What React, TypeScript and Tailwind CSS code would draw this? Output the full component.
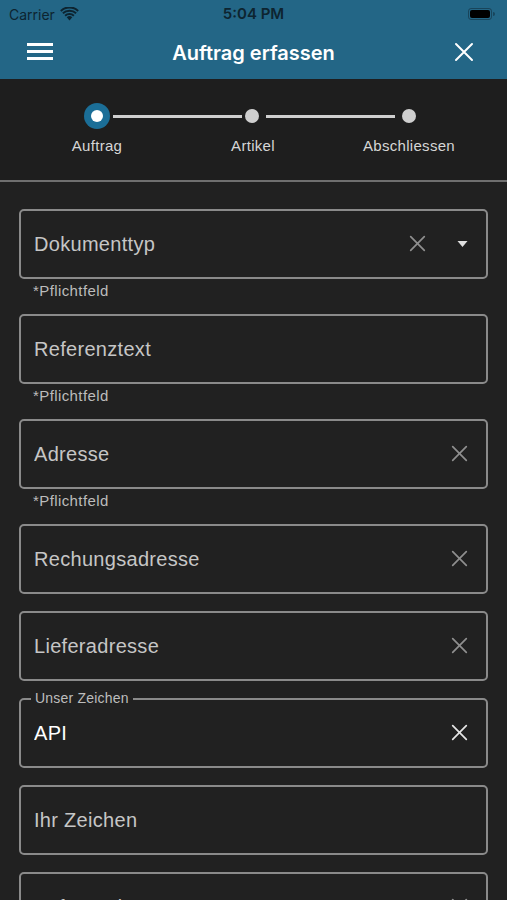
import { useState } from "react";

type Field = {
  label: string;
  value?: string;
  required?: boolean;
  clear?: boolean;
  dropdown?: boolean;
  floating?: string;
};

const FIELDS: Field[] = [
  { label: "Dokumenttyp", required: true, clear: true, dropdown: true },
  { label: "Referenztext", required: true },
  { label: "Adresse", required: true, clear: true },
  { label: "Rechungsadresse", clear: true },
  { label: "Lieferadresse", clear: true },
  { label: "Unser Zeichen", value: "API", clear: true, floating: "Unser Zeichen" },
  { label: "Ihr Zeichen" },
  { label: "Auftragsdatum", clear: true },
];

const STEPS = ["Auftrag", "Artikel", "Abschliessen"];

function XIcon({ className }: { className: string }) {
  return (
    <svg viewBox="0 0 20 20" className={className} fill="none" stroke="currentColor" strokeWidth={2} strokeLinecap="round">
      <path d="M2 2 L18 18 M18 2 L2 18" />
    </svg>
  );
}

function StatusBar() {
  return (
    <div className="relative flex h-[28px] items-center px-[9px] text-[14px] text-[#0d2430] font-['Inter',sans-serif]">
      <div className="flex items-center gap-[5px]">
        <span>Carrier</span>
        <svg viewBox="0 0 20 15" className="h-[14px] w-[19px]" fill="#0d2430">
          <path d="M10 14.5 L7 11 A4.5 4.5 0 0 1 13 11 Z" />
          <path d="M4.6 8.6 A7.8 7.8 0 0 1 15.4 8.6 L14 10.2 A5.8 5.8 0 0 0 6 10.2 Z" />
          <path d="M2.2 6 A11.2 11.2 0 0 1 17.8 6 L16.4 7.6 A9.2 9.2 0 0 0 3.6 7.6 Z" />
          <path d="M0 3.4 A14.4 14.4 0 0 1 20 3.4 L18.6 5 A12.4 12.4 0 0 0 1.4 5 Z" />
        </svg>
      </div>
      <span className="absolute left-1/2 -translate-x-1/2 font-semibold text-[15px]">5:04 PM</span>
      <div className="ml-auto flex items-center gap-[1px] pr-[3px]">
        <div className="h-[12px] w-[24px] rounded-[3px] border border-[#0d2430]/50 p-[1px]">
          <div className="h-full w-full rounded-[2px] bg-black" />
        </div>
        <div className="h-[4px] w-[2px] rounded-r bg-[#0d2430]/50" />
      </div>
    </div>
  );
}

function NavBar() {
  return (
    <div className="relative flex h-[51px] items-center px-[27px] pb-[4px] font-['Inter',sans-serif]">
      <div className="flex w-[26px] flex-col gap-[4px]">
        <div className="h-[3px] bg-white" />
        <div className="h-[3px] bg-white" />
        <div className="h-[3px] bg-white" />
      </div>
      <span className="absolute left-1/2 top-[10px] -translate-x-1/2 text-[20px] font-semibold text-white">Auftrag erfassen</span>
      <XIcon className="ml-auto mr-[6px] h-[20px] w-[20px] text-white" />
    </div>
  );
}

function Stepper() {
  return (
    <div className="border-b-2 border-[#6f6f6f] bg-[#1e1e1e] pt-[24px] pb-[22px] font-['Liberation_Sans',sans-serif]">
      <div className="flex items-center px-[84px]">
        <div className="flex h-[26px] w-[26px] items-center justify-center rounded-full bg-[#1b6e97]">
          <div className="h-[12px] w-[12px] rounded-full bg-white" />
        </div>
        <div className="mx-[3px] h-[3px] flex-1 bg-[#cfcfcf]" />
        <div className="h-[14px] w-[14px] rounded-full bg-[#cfcfcf]" />
        <div className="mx-[7px] h-[3px] flex-1 bg-[#cfcfcf]" />
        <div className="h-[14px] w-[14px] rounded-full bg-[#cfcfcf]" />
        <div className="w-[7px]" />
      </div>
      <div className="mt-[6px] grid grid-cols-[194px_118px_194px] text-center text-[15px] tracking-[0.3px] text-[#d6d6d6]">
        <span>{STEPS[0]}</span>
        <span>{STEPS[1]}</span>
        <span>{STEPS[2]}</span>
      </div>
    </div>
  );
}

function FormField({ field }: { field: Field }) {
  const [value, setValue] = useState(field.value ?? "");
  return (
    <div className={field.required ? "" : "pb-[17px]"}>
      <div className="relative flex h-[70px] items-center rounded-[5px] border-2 border-[#8a8a8a] bg-[#212121] pl-[13px] pr-[18px]">
        {field.floating && (
          <span className="absolute left-[10px] top-[-10px] bg-[#212121] px-[4px] text-[14px] leading-[16px] tracking-[0.2px] text-[#bdbdbd]">
            {field.floating}
          </span>
        )}
        <input
          value={value}
          onChange={(e) => setValue(e.target.value)}
          placeholder={field.label}
          className={
            "min-w-0 flex-1 bg-transparent text-[20px] tracking-[0.3px] outline-none placeholder:text-[#c6c6c6] " +
            (field.floating ? "text-white" : "text-[#c6c6c6]")
          }
        />
        {field.clear && (
          <XIcon className={"h-[17px] w-[17px] " + (field.floating ? "text-[#e6e6e6]" : "text-[#8f8f8f]") + (field.dropdown ? " mr-[31px]" : "")} />
        )}
        {field.dropdown && (
          <svg viewBox="0 0 10 6" className="h-[6px] w-[11px]" fill="#e0e0e0">
            <path d="M0 0 L10 0 L5 6 Z" />
          </svg>
        )}
      </div>
      {field.required && (
        <div className="h-[35px] pl-[14px] pt-[1px] text-[15px] tracking-[0.4px] text-[#bcbcbc]">*Pflichtfeld</div>
      )}
    </div>
  );
}

export default function App() {
  return (
    <div className="h-[900px] w-[507px] overflow-hidden bg-[#212121] font-['Liberation_Sans',sans-serif]">
      <div className="bg-[#236686]">
        <StatusBar />
        <NavBar />
      </div>
      <Stepper />
      <div className="px-[19px] pt-[27px]">
        {FIELDS.map((f) => (
          <FormField key={f.label} field={f} />
        ))}
      </div>
    </div>
  );
}
